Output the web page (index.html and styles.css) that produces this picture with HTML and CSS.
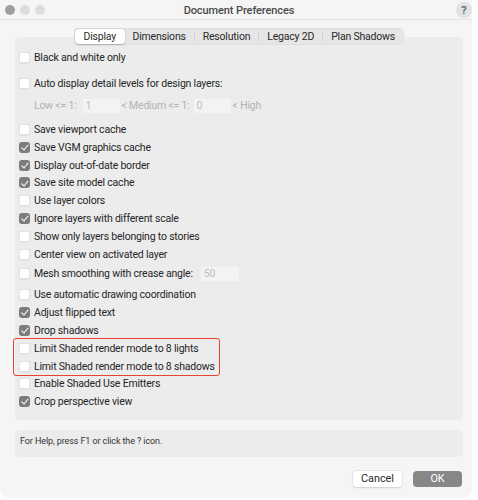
FILE: index.html
```html
<!DOCTYPE html>
<html>
<head>
<meta charset="utf-8">
<link rel="stylesheet" href="styles.css">
</head>
<body>
<div class="window">
  <div class="titlebar">
    <div class="lights"><span class="light dark"></span><span class="light"></span><span class="light"></span></div>
    <div class="title">Document Preferences</div>
    <div class="help">?</div>
  </div>
  <div class="tabs-wrap">
    <div class="tabs">
      <div class="tab active">Display</div>
      <div class="tab">Dimensions</div>
      <div class="sep"></div>
      <div class="tab">Resolution</div>
      <div class="sep"></div>
      <div class="tab">Legacy 2D</div>
      <div class="sep"></div>
      <div class="tab">Plan Shadows</div>
    </div>
  </div>
  <div class="panel">
    <div class="row first"><span class="cb"></span>Black and white only</div>
    <div class="row auto"><span class="cb"></span>Auto display detail levels for design layers:</div>
    <div class="row levels">
      <span>Low &lt;= 1:</span><span class="field f1">1</span><span>&lt; Medium &lt;= 1:</span><span class="field f2">0</span><span>&lt; High</span>
    </div>
    <div class="row gap"><span class="cb"></span>Save viewport cache</div>
    <div class="row"><span class="cb on"></span>Save VGM graphics cache</div>
    <div class="row"><span class="cb on"></span>Display out-of-date border</div>
    <div class="row"><span class="cb on"></span>Save site model cache</div>
    <div class="row"><span class="cb"></span>Use layer colors</div>
    <div class="row"><span class="cb on"></span>Ignore layers with different scale</div>
    <div class="row"><span class="cb"></span>Show only layers belonging to stories</div>
    <div class="row"><span class="cb"></span>Center view on activated layer</div>
    <div class="row mesh"><span class="cb"></span>Mesh smoothing with crease angle:<span class="field f3">50</span></div>
    <div class="row"><span class="cb"></span>Use automatic drawing coordination</div>
    <div class="row"><span class="cb on"></span>Adjust flipped text</div>
    <div class="row"><span class="cb on"></span>Drop shadows</div>
    <div class="highlight">
      <div class="row"><span class="cb"></span>Limit Shaded render mode to 8 lights</div>
      <div class="row"><span class="cb"></span>Limit Shaded render mode to 8 shadows</div>
    </div>
    <div class="row"><span class="cb"></span>Enable Shaded Use Emitters</div>
    <div class="row"><span class="cb on"></span>Crop perspective view</div>
  </div>
  <div class="helpbox">For Help, press F1 or click the ? icon.</div>
  <div class="buttons">
    <div class="btn cancel">Cancel</div>
    <div class="btn ok">OK</div>
  </div>
</div>
</body>
</html>
```
FILE: styles.css
```css
html, body {
  margin: 0;
  padding: 0;
  background: #ffffff;
}
body {
  font-family: "Roboto", "Liberation Sans", sans-serif;
  color: #262626;
  width: 478px;
  height: 500px;
  overflow: hidden;
}
.window {
  width: 472px;
  height: 498px;
  background: #f5f5f5;
  border-radius: 0 0 10px 10px;
  box-sizing: border-box;
}
.titlebar {
  height: 20px;
  border-bottom: 1px solid #e4e4e4;
  display: flex;
  align-items: center;
  box-sizing: border-box;
  padding-top: 1px;
}
.lights {
  display: flex;
  gap: 5px;
  padding-left: 5px;
  width: 60px;
  box-sizing: border-box;
}
.light {
  width: 10px;
  height: 10px;
  border-radius: 50%;
  background: #dcdcdc;
}
.light.dark { background: #9e9e9e; }
.title {
  flex: 1;
  text-align: center;
  font-size: 11px;
  font-weight: 500;
  letter-spacing: -0.1px;
  color: #4a4a4a;
}
.help {
  width: 16px;
  height: 16px;
  border-radius: 50%;
  background: #e2e2e2;
  color: #555;
  font-size: 11px;
  font-weight: 500;
  display: flex;
  align-items: center;
  justify-content: center;
  margin-left: 38px;
}
.tabs-wrap {
  display: flex;
  justify-content: center;
  margin: 8px 9px -8px 15px;
  position: relative;
  z-index: 1;
}
.tabs {
  display: flex;
  align-items: center;
  height: 17px;
  background: #e6e6e6;
  border-radius: 5px;
  padding: 0 1px;
  box-shadow: inset 0 0 0 0.5px #dadada;
}
.tab {
  font-size: 10.5px;
  letter-spacing: -0.2px;
  padding: 0 8px;
  height: 15px;
  line-height: 15px;
  color: #2a2a2a;
  border-radius: 4px;
}
.tab.active {
  background: #ffffff;
  box-shadow: 0 0.5px 1.5px rgba(0,0,0,0.25);
  padding: 0 8.5px;
}
.sep {
  width: 1px;
  height: 10px;
  background: #d2d2d2;
}
.panel {
  margin: 0 9px 0 15px;
  background: #ececec;
  border-radius: 5px;
  height: 383px;
  box-sizing: border-box;
  padding: 12px 0 0 4px;
}
.row {
  height: 17.8px;
  display: flex;
  align-items: center;
  font-size: 10.5px;
  letter-spacing: -0.2px;
  white-space: nowrap;
}
.row.auto { margin-top: 8px; }
.row.levels {
  margin-top: 4px;
  color: #b3b3b3;
  padding-left: 15px;
  height: 18px;
}
.row.gap { margin-top: 6px; }
.row.mesh {
  height: 20px;
  margin: 1px 0 2px;
}
.cb {
  width: 11px;
  height: 11px;
  border-radius: 3px;
  background: #ffffff;
  box-shadow: inset 0 0 0 0.5px #c8c8c8, 0 0.5px 0.5px rgba(0,0,0,0.08);
  margin-right: 4px;
  flex: none;
  position: relative;
}
.cb.on {
  background: #7c7c7c;
  box-shadow: none;
}
.cb.on::after {
  content: "";
  position: absolute;
  left: 3.5px;
  top: 1.2px;
  width: 2.6px;
  height: 5.6px;
  border: solid #ffffff;
  border-width: 0 1.6px 1.6px 0;
  transform: rotate(40deg);
}
.field {
  display: inline-block;
  height: 14px;
  line-height: 14px;
  background: #f3f3f3;
  color: #bdbdbd;
  box-sizing: border-box;
  padding-left: 3px;
}
.f1 { width: 37px; margin: 0 2px 0 6px; }
.f2 { width: 37px; margin: 0 2px 0 4px; }
.f3 { width: 38px; margin-left: 8px; }
.highlight {
  width: 205px;
  margin-left: -5px;
  padding-left: 5px;
  box-sizing: border-box;
  outline: 1.5px solid #e8432d;
  border-radius: 2px;
}
.helpbox {
  margin: 10px 9px 0 15px;
  height: 27px;
  background: #ececec;
  border-radius: 5px;
  font-size: 9px;
  letter-spacing: -0.1px;
  color: #333;
  padding: 6px 5px 0;
  box-sizing: border-box;
}
.buttons {
  display: flex;
  justify-content: flex-end;
  gap: 11px;
  margin: 14px 10px 0 0;
}
.btn {
  width: 49px;
  height: 16px;
  line-height: 16px;
  text-align: center;
  font-size: 10.8px;
  border-radius: 4px;
}
.cancel {
  background: #ffffff;
  color: #2a2a2a;
  box-shadow: 0 0 0 0.5px #d6d6d6, 0 1px 1.5px rgba(0,0,0,0.15);
}
.ok {
  background: #878787;
  color: #ffffff;
}
```
